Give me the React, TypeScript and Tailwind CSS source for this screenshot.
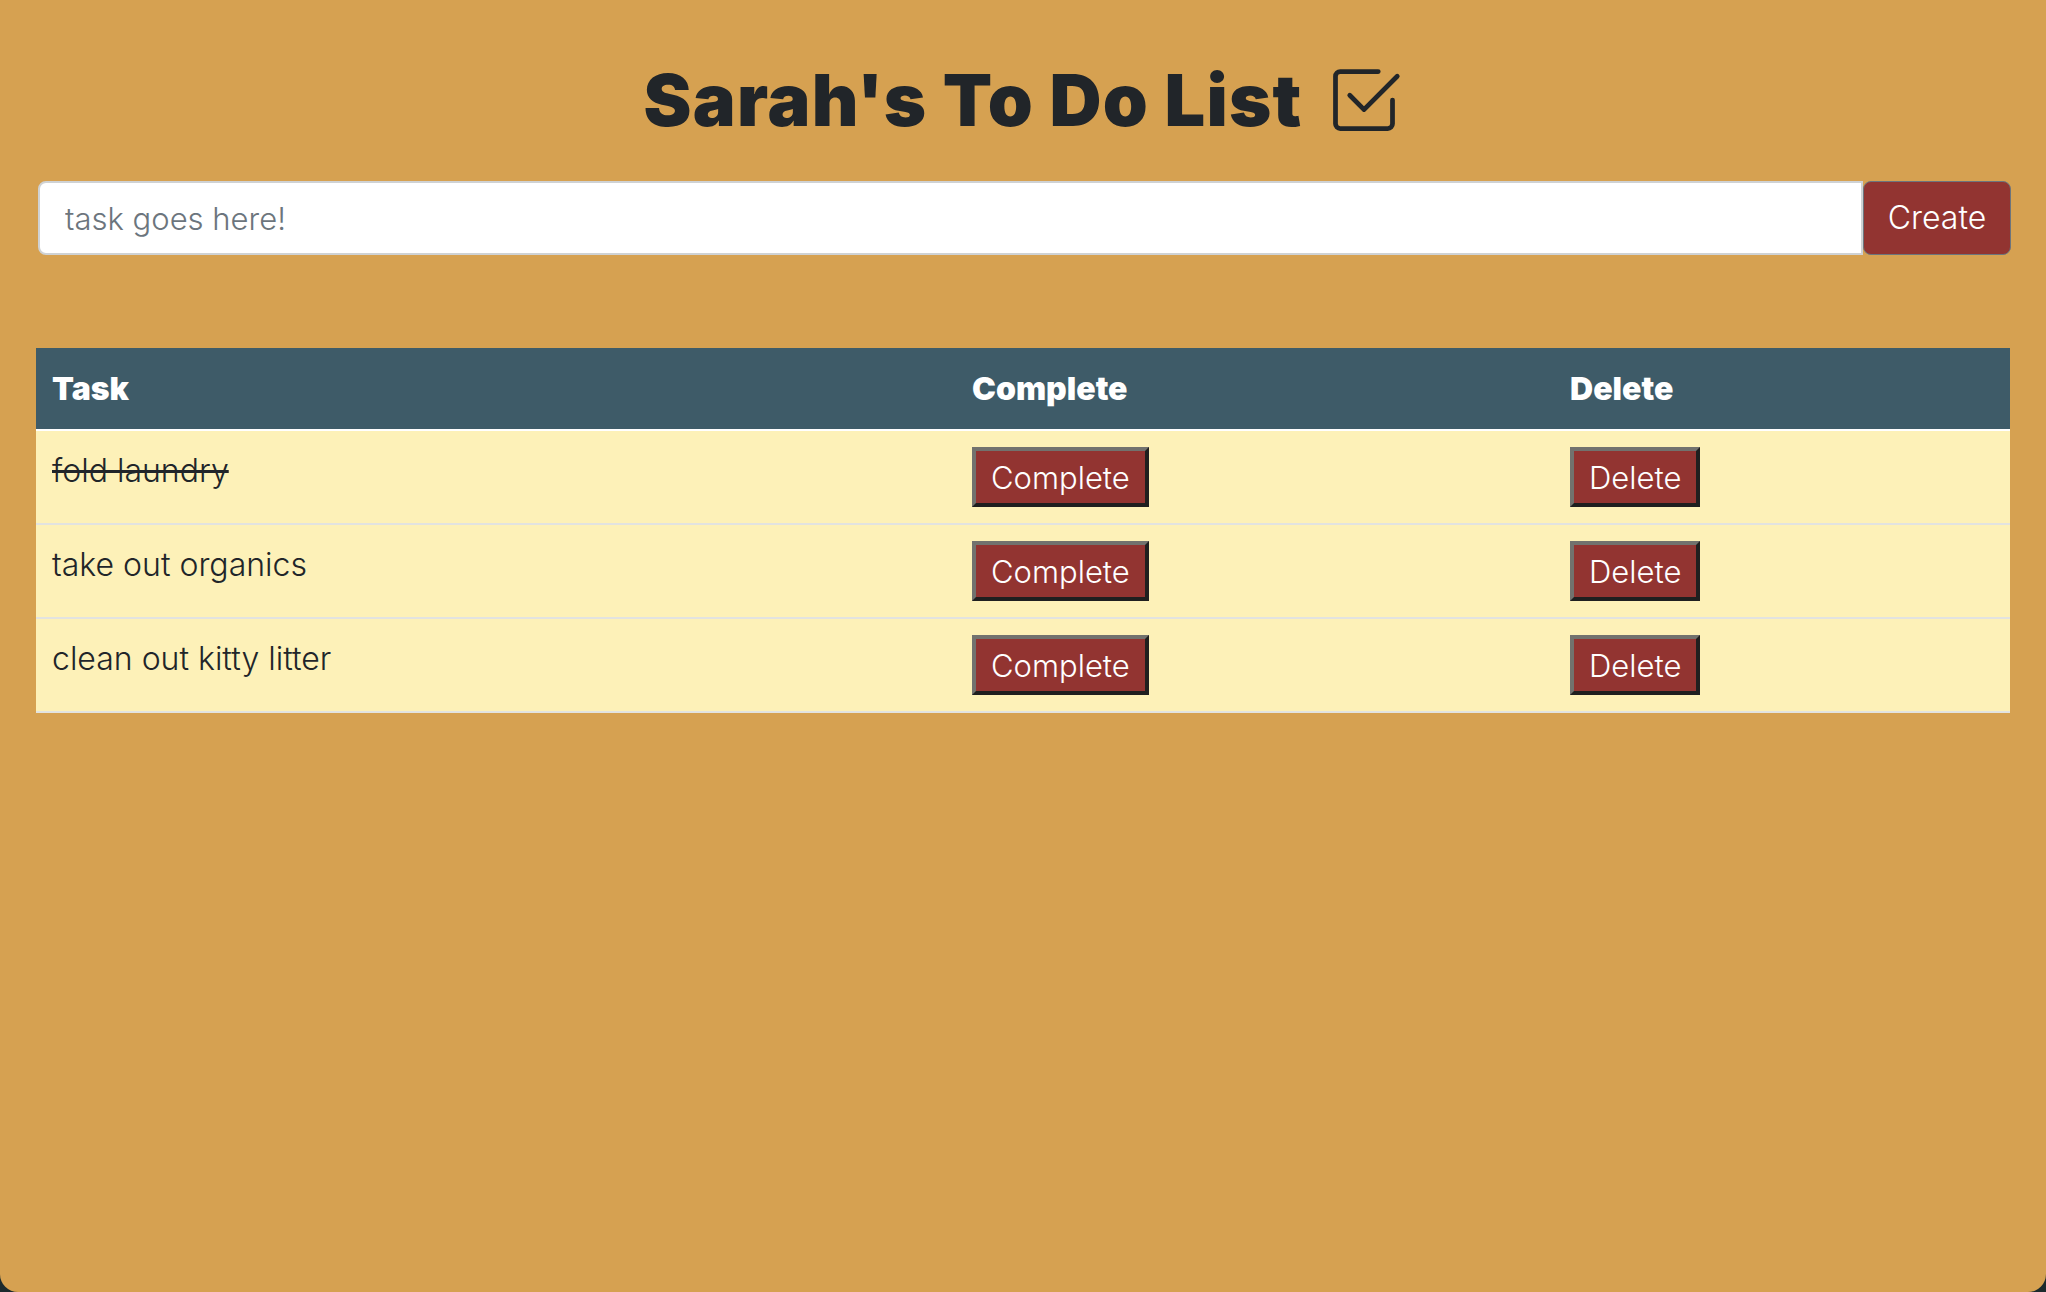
import React from "react";

const tasks = [
  { text: "fold laundry", done: true },
  { text: "take out organics", done: false },
  { text: "clean out kitty litter", done: false },
];

function CheckSquare() {
  return (
    <svg
      width="76"
      height="76"
      viewBox="0 0 16 16"
      fill="#212529"
      className="inline-block"
      aria-hidden="true"
    >
      <path d="M3 14.5A1.5 1.5 0 0 1 1.5 13V3A1.5 1.5 0 0 1 3 1.5h8a.5.5 0 0 1 0 1H3a.5.5 0 0 0-.5.5v10a.5.5 0 0 0 .5.5h10a.5.5 0 0 0 .5-.5V8a.5.5 0 0 1 1 0v5a1.5 1.5 0 0 1-1.5 1.5z" />
      <path d="m8.354 10.354 7-7a.5.5 0 0 0-.708-.708L8 9.293 5.354 6.646a.5.5 0 1 0-.708.708l3 3a.5.5 0 0 0 .708 0" />
    </svg>
  );
}

function RowButton({ label }: { label: string }) {
  return (
    <button
      type="button"
      className="h-[60px] px-[15px] bg-[#923431] text-white text-[31px] font-light leading-none border-4 border-solid border-t-[#72726e] border-l-[#72726e] border-b-[#1f1f1f] border-r-[#1f1f1f]"
    >
      {label}
    </button>
  );
}

export default function App() {
  return (
    <div
      className="w-[2046px] h-[1292px] bg-[#1c2a2d] overflow-hidden"
      style={{ fontFamily: "Inter, 'Noto Sans', sans-serif" }}
    >
      <div className="h-full bg-[#d6a151] rounded-b-[18px] px-[36px] pt-[58px]">
        <h1 className="flex items-center justify-center gap-[24px] text-[72px] leading-[84px] font-black text-[#212529] tracking-[1.2px]">
          <span>Sarah's To Do List</span>
          <CheckSquare />
        </h1>

        <div className="flex mt-[39px] ml-[2px] mr-[-1px] h-[74px]">
          <input
            type="text"
            placeholder="task goes here!"
            className="flex-1 h-full bg-white border-2 border-[#cfd2d4] rounded-l-[8px] px-[25px] text-[31px] font-light text-[#212529] placeholder:text-[#6c757d] outline-none"
          />
          <button
            type="button"
            className="w-[148px] h-full bg-[#923431] border border-[#6c757d] rounded-[8px] text-white text-[32px] font-light"
          >
            Create
          </button>
        </div>

        <table className="mt-[93px] w-[1974px] border-collapse table-fixed">
          <colgroup>
            <col className="w-[920px]" />
            <col className="w-[598px]" />
            <col className="w-[456px]" />
          </colgroup>
          <thead>
            <tr className="bg-[#3e5b68] h-[82px] border-b-2 border-white">
              <th className="text-left align-middle px-[16px] text-white text-[32px] font-black">
                Task
              </th>
              <th className="text-left align-middle px-[16px] text-white text-[32px] font-black">
                Complete
              </th>
              <th className="text-left align-middle px-[16px] text-white text-[32px] font-black">
                Delete
              </th>
            </tr>
          </thead>
          <tbody>
            {tasks.map((t) => (
              <tr key={t.text} className="bg-[#fdf1b8] border-b-2 border-[#e2e3e0]">
                <td className="align-top p-[16px] text-[32px] leading-[48px] font-light text-[#212529]">
                  <span className={t.done ? "line-through" : ""}>{t.text}</span>
                </td>
                <td className="align-top p-[16px]">
                  <RowButton label="Complete" />
                </td>
                <td className="align-top p-[16px]">
                  <RowButton label="Delete" />
                </td>
              </tr>
            ))}
          </tbody>
        </table>
      </div>
    </div>
  );
}
